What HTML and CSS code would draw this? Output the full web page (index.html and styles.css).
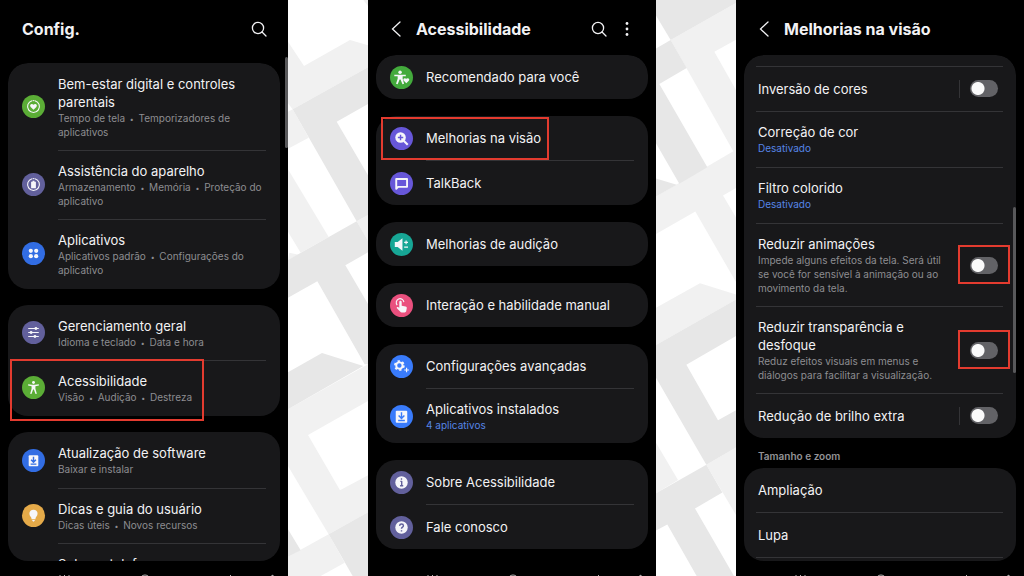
FILE: index.html
```html
<!DOCTYPE html>
<html lang="pt-BR">
<head>
<meta charset="utf-8">
<meta name="viewport" content="width=device-width, initial-scale=1">
<title>Configurações de acessibilidade</title>
<link rel="stylesheet" href="styles.css">
</head>
<body>
<main class="board">

<section class="phone phone-config">
  <header class="bar bar-tall">
    <h1 class="bar-title">Config.</h1>
    <button class="tool" aria-label="Pesquisar"><svg viewBox="0 0 16 16"><circle cx="7" cy="7" r="5.6"/><path d="M11 11l4 4"/></svg></button>
  </header>
  <div class="list">
    <nav class="card padded">
      <a class="row" href="#bem-estar">
        <svg class="icon green" viewBox="0 0 24 24"><path class="ring" d="M10.500 6a6.200 6.200 0 1 0 3 0M12 5.800h.1"/><path class="fill" d="M12 15.500l-3-3c-1.700-2 1-4.300 3-2.200 2-2.100 4.700.2 3 2.200z"/></svg>
        <span class="text"><span class="name">Bem-estar digital e controles parentais</span><span class="note">Tempo de tela <i>&nbsp;•&nbsp;</i> Temporizadores de aplicativos</span></span>
      </a>
      <a class="row" href="#aparelho">
        <svg class="icon slate" viewBox="0 0 24 24"><path class="ring" d="M10.500 6a6.200 6.200 0 1 0 3 0M12 5.800h.1"/><path class="fill" d="M9.500 9h1.500v-1h2v1h1.500v7h-5z"/></svg>
        <span class="text"><span class="name">Assistência do aparelho</span><span class="note">Armazenamento <i>&nbsp;•&nbsp;</i> Memória <i>&nbsp;•&nbsp;</i> Proteção do aplicativo</span></span>
      </a>
      <a class="row" href="#aplicativos">
        <svg class="icon blue" viewBox="0 0 24 24"><g class="fill"><circle cx="9.200" cy="9.200" r="2.200"/><circle cx="14.800" cy="9.200" r="2.200"/><circle cx="9.200" cy="14.800" r="2.200"/><circle cx="14.800" cy="14.800" r="2.200"/></g></svg>
        <span class="text"><span class="name">Aplicativos</span><span class="note">Aplicativos padrão <i>&nbsp;•&nbsp;</i> Configurações do aplicativo</span></span>
      </a>
    </nav>
    <nav class="card padded">
      <a class="row" href="#geral">
        <svg class="icon slate" viewBox="0 0 24 24"><path class="line" d="M6.500 7.800h11M6.500 12h11M6.500 16.200h11"/><g class="fill"><circle cx="14.500" cy="7.800" r="1.500"/><circle cx="9.500" cy="12" r="1.500"/><circle cx="13.500" cy="16.200" r="1.500"/></g></svg>
        <span class="text"><span class="name">Gerenciamento geral</span><span class="note">Idioma e teclado <i>&nbsp;•&nbsp;</i> Data e hora</span></span>
      </a>
      <a class="row marked mark-wide" href="#acessibilidade">
        <svg class="icon green" viewBox="0 0 24 24"><g class="fill"><circle cx="12" cy="6.800" r="1.500"/><path d="M6.500 8.500l4 .7h3l4-.7.2 1.300-3.700.9v2.500l1.500 5.300-1.400.4-1.700-4.900h-.8l-1.700 4.900-1.400-.4 1.500-5.300v-2.500l-3.700-.9z"/></g></svg>
        <span class="text"><span class="name">Acessibilidade</span><span class="note">Visão <i>&nbsp;•&nbsp;</i> Audição <i>&nbsp;•&nbsp;</i> Destreza</span></span>
      </a>
    </nav>
    <nav class="card padded">
      <a class="row status" href="#software">
        <svg class="icon blue" viewBox="0 0 24 24"><rect class="fill" x="7" y="6.500" width="10" height="11.500" rx="1"/><path class="cut" d="M12 8v5.500M9.500 11.200l2.500 2.500 2.500-2.500M9 15.800h6"/></svg>
        <span class="text"><span class="name">Atualização de software</span><span class="note">Baixar e instalar</span></span>
      </a>
      <a class="row" href="#dicas">
        <svg class="icon amber" viewBox="0 0 24 24"><path class="fill" d="M12 6c-5.300 0-5 6-2.500 7.700l.6 2.300h3.800l.6-2.300C17 12 17.300 6 12 6zM10.700 16.800h2.600v.8l-1.300.9-1.300-.9z"/></svg>
        <span class="text"><span class="name">Dicas e guia do usuário</span><span class="note">Dicas úteis <i>&nbsp;•&nbsp;</i> Novos recursos</span></span>
      </a>
      <a class="row status bare" href="#telefone">
        <span class="text"><span class="name">Sobre o telefone</span></span>
      </a>
    </nav>
  </div>
  <svg class="system" viewBox="0 0 288 15"><path d="M60 14v9M64.500 14v9M69 14v9M231 14l-5 5 5 5M270 16l3-2v6"/><circle cx="145" cy="19" r="5"/></svg>
  <span class="scroll scroll-edge"></span>
</section>

<svg class="pattern" viewBox="6 0 240 1728" preserveAspectRatio="none" aria-hidden="true">
  <g class="pale">
    <path d="M232 0h14v18zM6 125L54 198 192 120 246 136V202L20 328 6 310zM6 335L20 328 68 413 6 446zM6 508L128 711 44 758 6 695zM10 758L38 764 6 780z"/>
    <path d="M212 664L246 645V722zM6 1228L246 1093V1203L66 1305 162 1471 246 1426V1537L128 1603 6 1398zM6 1670L128 1603 176 1688 104 1728H6z"/>
  </g>
  <path class="grey" d="M20 328L246 202V312L152 365 246 526V645L212 664zM6 780L212 664 246 722V757L178 796 246 912V1093H236L94 844 6 893zM6 1117L108 1059 232 1098 6 1228zM6 1588L44 1651 6 1670zM128 1603L246 1537V1728H200z"/>
</svg>

<section class="phone phone-access">
  <header class="bar">
    <button class="tool back" aria-label="Voltar"><svg viewBox="0 0 16 16"><path d="M12 1L4.500 8l7.500 7"/></svg></button>
    <h2 class="bar-title">Acessibilidade</h2>
    <button class="tool" aria-label="Pesquisar"><svg viewBox="0 0 16 16"><circle cx="7" cy="7" r="5.600"/><path d="M11 11l4 4"/></svg></button>
    <button class="tool" aria-label="Mais opções"><svg viewBox="0 0 16 16"><g class="dots"><circle cx="8" cy="2.500" r="1.400"/><circle cx="8" cy="8" r="1.400"/><circle cx="8" cy="13.500" r="1.400"/></g></svg></button>
  </header>
  <div class="list loose">
    <nav class="card">
      <a class="row" href="#recomendado">
        <svg class="icon leaf" viewBox="0 0 24 24"><g class="fill"><circle cx="10.500" cy="6.600" r="1.800"/><path d="M4.500 9h12v1.700h-3.300v2.500l1.500 5.300-1.700.5-2-5h-1l-2 5-1.700-.5 1.700-5.300v-2.500H4.500zM17 18l-2.600-2.600c-1.600-2 1-3.800 2.600-2 1.600-1.800 4.200 0 2.600 2z"/></g></svg>
        <span class="text"><span class="name">Recomendado para você</span></span>
      </a>
    </nav>
    <nav class="card">
      <a class="row marked mark-tight" href="#visao">
        <svg class="icon violet" viewBox="0 0 24 24"><circle class="fill" cx="11" cy="11" r="5.500"/><path class="thick" d="M14.500 14.500l4 4"/><path class="cut" d="M11 8.200v5.600M8.200 11h5.600"/></svg>
        <span class="text"><span class="name">Melhorias na visão</span></span>
      </a>
      <a class="row" href="#talkback">
        <svg class="icon violet" viewBox="0 0 24 24"><path class="heavy" d="M6.500 7.300h11.300v8.200H8.500l-2 2z"/></svg>
        <span class="text"><span class="name">TalkBack</span></span>
      </a>
    </nav>
    <nav class="card">
      <a class="row" href="#audicao">
        <svg class="icon teal" viewBox="0 0 24 24"><path class="fill" d="M5 9.500h3l5-4v13l-5-4H5z"/><path class="line" d="M14.800 9.800h4M16.800 7.800v4M14.800 14.800h4"/></svg>
        <span class="text"><span class="name">Melhorias de audição</span></span>
      </a>
    </nav>
    <nav class="card">
      <a class="row" href="#interacao">
        <svg class="icon pink" viewBox="0 0 24 24"><path class="line" d="M7.500 11.500a4 4 0 1 1 7-3"/><path class="fill" d="M9.700 8.500c0-1.800 2.500-1.800 2.500 0v3.700l4 .8c1 .2 1.400.8 1.300 1.800l-.6 3.200c-.2.8-.7 1.200-1.500 1.200h-3.200c-.6 0-1-.2-1.400-.6l-3.600-3.800c-.5-.8.3-1.500 1-1.200l1.500.7z"/></svg>
        <span class="text"><span class="name">Interação e habilidade manual</span></span>
      </a>
    </nav>
    <nav class="card">
      <a class="row" href="#avancadas">
        <svg class="icon azure" viewBox="0 0 24 24"><circle cx="9.800" cy="11" r="3.300" class="heavy"/><circle cx="9.800" cy="11" r="4.700" class="teeth"/><path class="line" d="M17.300 13.300v4.800M14.900 15.700h4.800"/></svg>
        <span class="text"><span class="name">Configurações avançadas</span></span>
      </a>
      <a class="row" href="#instalados">
        <svg class="icon azure" viewBox="0 0 24 24"><rect class="fill" x="6" y="6" width="12" height="12.500" rx="1"/><path class="cut" d="M12 7.500v6M9 11l3 3 3-3M8.500 16.200h7"/></svg>
        <span class="text"><span class="name">Aplicativos instalados</span><span class="note link">4 aplicativos</span></span>
      </a>
    </nav>
    <nav class="card">
      <a class="row" href="#sobre">
        <svg class="icon slate" viewBox="0 0 24 24"><circle class="fill" cx="12" cy="12" r="6.500"/><path class="cut" d="M10.800 10.800H12.200v4.500M10.500 15.300h3.300M11.300 8.400h1.400"/></svg>
        <span class="text"><span class="name">Sobre Acessibilidade</span></span>
      </a>
      <a class="row" href="#fale">
        <svg class="icon slate" viewBox="0 0 24 24"><circle class="fill" cx="12" cy="12" r="6.500"/><path class="cut" d="M10 10.300c.2-2.600 4-2.400 4-.2 0 1.500-2 1.500-2 3.200M12 14.800v1.400"/></svg>
        <span class="text"><span class="name">Fale conosco</span></span>
      </a>
    </nav>
  </div>
  <svg class="system" viewBox="0 0 288 15"><path d="M60 14v9M64.500 14v9M69 14v9M231 14l-5 5 5 5M270 16l3-2v6"/><circle cx="145" cy="19" r="5"/></svg>
</section>

<svg class="pattern" viewBox="18 0 240 1568" preserveAspectRatio="none" aria-hidden="true">
  <path class="pale" d="M62 109L258 8V108L193 141 258 245V420L250 412zM18 535L250 412 258 420V512L219 532 258 592V768L136 576 18 637zM18 838L150 771 258 802V815L18 939zM18 1205L84 1307 18 1343zM169 1265L258 1218V1402z"/>
  <path class="grey" d="M18 0H258V8L62 109 18 42zM18 132L62 109 110 185 28 229 172 455 88 500 18 390zM18 486L80 503 18 535zM18 939L258 815V915L109 993 204 1144 258 1117V1218L169 1265 18 1028zM18 1343L169 1265 217 1341 135 1384 252 1568H140L52 1428 18 1444z"/>
</svg>

<section class="phone phone-vision">
  <header class="bar">
    <button class="tool back" aria-label="Voltar"><svg viewBox="0 0 16 16"><path d="M12 1L4.500 8l7.500 7"/></svg></button>
    <h2 class="bar-title">Melhorias na visão</h2>
  </header>
  <div class="list plain">
    <div class="card continued">
      <div class="row">
        <label class="text" for="inversao"><span class="name">Inversão de cores</span></label>
        <span class="switch split"><input type="checkbox" id="inversao"></span>
      </div>
      <a class="row status" href="#correcao"><span class="text"><span class="name">Correção de cor</span><span class="note link">Desativado</span></span></a>
      <a class="row status" href="#filtro"><span class="text"><span class="name">Filtro colorido</span><span class="note link">Desativado</span></span></a>
      <div class="row">
        <label class="text" for="animacoes"><span class="name">Reduzir animações</span><span class="note">Impede alguns efeitos da tela. Será útil se você for sensível à animação ou ao movimento da tela.</span></label>
        <span class="switch boxed"><input type="checkbox" id="animacoes"></span>
      </div>
      <div class="row">
        <label class="text" for="transparencia"><span class="name">Reduzir transparência e desfoque</span><span class="note">Reduz efeitos visuais em menus e diálogos para facilitar a visualização.</span></label>
        <span class="switch boxed"><input type="checkbox" id="transparencia"></span>
      </div>
      <div class="row">
        <label class="text" for="brilho"><span class="name">Redução de brilho extra</span></label>
        <span class="switch split"><input type="checkbox" id="brilho"></span>
      </div>
    </div>
    <h3 class="label">Tamanho e zoom</h3>
    <nav class="card trailing">
      <a class="row" href="#ampliacao"><span class="text"><span class="name">Ampliação</span></span></a>
      <a class="row" href="#lupa"><span class="text"><span class="name">Lupa</span></span></a>
    </nav>
  </div>
  <svg class="system" viewBox="0 0 288 15"><path d="M60 14v9M64.500 14v9M69 14v9M231 14l-5 5 5 5M270 16l3-2v6"/><circle cx="145" cy="19" r="5"/></svg>
  <span class="scroll scroll-inner"></span>
</section>

</main>
</body>
</html>
```

FILE: styles.css
```css
* {
  box-sizing: border-box;
}

body {
  margin: 0;
  background: #fff;
  font-family: Inter, Roboto, "Liberation Sans", sans-serif;
}

.board {
  display: grid;
  grid-template-columns: 1fr 80px 1fr 80px 1fr;
  grid-template-rows: 100vh;
}

/* Backdrop strips */
.pattern {
  display: block;
  width: 100%;
  height: 100%;
}

.pale {
  fill: #f1f1f1;
}

.grey {
  fill: #e7e7e7;
}

/* Phone frame */
.phone {
  position: relative;
  display: flex;
  flex-direction: column;
  min-width: 0;
  overflow: hidden;
  background: #000;
  color: #f2f2f4;
}

.bar {
  display: flex;
  flex: none;
  align-items: center;
  gap: 12px;
  padding: 18px 21px 15px 20px;
}

.bar-tall {
  padding: 18px 21px 23px 22px;
}

.bar-title {
  flex: 1;
  margin: 0;
  font-size: 16px;
  font-weight: 700;
  line-height: 22px;
}

.tool {
  display: block;
  padding: 0;
  border: 0;
  background: none;
  cursor: pointer;
}

.tool svg {
  display: block;
  width: 16px;
  height: 16px;
  fill: none;
  stroke: #f2f2f4;
  stroke-width: 1.3;
  stroke-linecap: round;
}

.tool .dots {
  fill: #f2f2f4;
  stroke: none;
}

.list {
  display: flex;
  flex: 1;
  flex-direction: column;
  gap: 16px;
  min-height: 0;
  margin: 0 8px;
  overflow: hidden;
  border-radius: 20px;
}

.loose {
  gap: 17px;
}

.plain {
  gap: 0;
}

.system {
  display: block;
  flex: none;
  width: 100%;
  height: 15px;
  fill: none;
  stroke: #b5b5b5;
}

/* Cards and rows */
.card {
  flex: none;
  border-radius: 20px;
  background: #18181a;
}

.padded {
  padding: 1px 0;
}

.continued {
  padding-top: 11px;
}

.row {
  position: relative;
  display: flex;
  align-items: center;
  gap: 13px;
  padding: 0 14px;
  color: inherit;
  text-decoration: none;
}

.bare {
  padding-left: 50px;
}

.text {
  display: flex;
  flex: 1;
  flex-direction: column;
  justify-content: center;
  align-self: stretch;
  min-width: 0;
  min-height: 44px;
  padding: 11px 0;
}

.status .text {
  justify-content: flex-start;
  padding-bottom: 12px;
}

.row:not(:last-child) .text {
  border-bottom: 1px solid #343437;
  min-height: 45px;
}

.name {
  font-size: 13px;
  line-height: 18px;
}

.note {
  color: #8d8d91;
  font-size: 10px;
  line-height: 14px;
}

.note i {
  font-size: 7px;
  font-style: normal;
  line-height: 7px;
  vertical-align: middle;
}

.link {
  color: #5685e6;
}

.label {
  margin: 0;
  padding: 11px 14px 5px;
  color: #929296;
  font-size: 10px;
  font-weight: 600;
  line-height: 14px;
}

/* Rows whose rules run the full width */
.plain .row {
  margin: 0 13px 0 12px;
  padding: 0 5px 0 2px;
}

.plain .row .text {
  border-bottom: 0;
}

.plain .row:not(:last-child),
.trailing .row {
  border-bottom: 1px solid #343437;
}

.plain .row .text {
  min-height: 44px;
}

.continued {
  background: linear-gradient(#343437, #343437) 12px 11px / calc(100% - 25px) 1px no-repeat #18181a;
}

.continued .row:first-child {
  padding-top: 1px;
}

.trailing {
  padding-bottom: 24px;
}

/* Icons */
.icon {
  flex: none;
  width: 23px;
  height: 23px;
  border-radius: 50%;
  background: var(--tone);
  fill: none;
  stroke-linejoin: round;
}

.phone-config .icon {
  margin-bottom: 2px;
}

.green { --tone: #5bad36; }
.leaf { --tone: #43aa3c; }
.slate { --tone: #62609c; }
.blue { --tone: #326de3; }
.azure { --tone: #397bfb; }
.amber { --tone: #e5aa49; }
.violet { --tone: #6757d9; }
.teal { --tone: #17a695; }
.pink { --tone: #ea507e; }

.fill {
  fill: #f6f6fa;
}

.ring,
.line,
.thick,
.heavy,
.teeth,
.cut {
  stroke: #f6f6fa;
  stroke-width: 1.2;
}

.ring {
  stroke-linecap: round;
}

.heavy {
  stroke-width: 2;
}

.thick {
  stroke-width: 2.2;
}

.teeth {
  stroke-width: 1.8;
  stroke-dasharray: 2.4 2.52;
}

.cut {
  stroke: var(--tone);
  stroke-width: 1.5;
}

/* Switches */
.switch {
  position: relative;
  display: flex;
  flex: none;
}

.boxed {
  margin-left: 14px;
}

.switch input {
  width: 28px;
  height: 17px;
  margin: 0;
  border-radius: 9px;
  appearance: none;
  background: radial-gradient(circle at 8px 50%, #fafafa 6px, #626266 7px);
  cursor: pointer;
}

.switch input:checked {
  background: radial-gradient(circle at 20px 50%, #fafafa 6px, #397bfb 7px);
}

.split::before {
  width: 1px;
  height: 18px;
  margin-right: 10px;
  background: #343437;
  content: "";
}

/* Red call-out frames */
.marked::after,
.boxed::after {
  position: absolute;
  border: 2px solid #e33b2f;
  content: "";
  pointer-events: none;
}

.mark-wide::after {
  inset: -2px 76px -6px 2px;
}

.mark-tight::after {
  inset: 1px 99px 1px 5px;
}

.boxed::after {
  inset: -12px -12px -10px;
}

/* Scroll indicators */
.scroll {
  position: absolute;
  width: 3px;
  border-radius: 2px;
  background: #58585a;
}

.scroll-edge {
  top: 57px;
  right: 0;
  height: 91px;
}

.scroll-inner {
  top: 207px;
  right: 8px;
  height: 166px;
}
```
